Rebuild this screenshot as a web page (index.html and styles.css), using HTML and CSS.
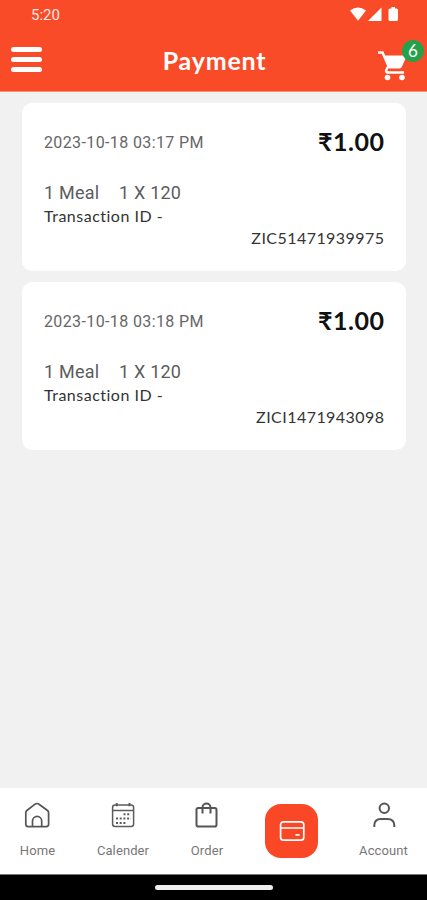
FILE: index.html
```html
<!DOCTYPE html>
<html lang="en">
<head>
<meta charset="utf-8">
<title>Payment</title>
<link rel="stylesheet" href="styles.css">
</head>
<body>
<header class="header">
  <div class="status">
    <span class="time">5:20</span>
    <svg class="status-icons" width="50" height="16" viewBox="0 0 50 16" fill="#fff"><path d="M0 3.500Q8-2.500 16 3.500L8 13.800Z"/><path d="M18 14L31.500 .5V14Z"/><path d="M41.500 0H45V1.500H46.500Q48 1.500 48 3V12.500Q48 14 46.500 14H40Q38.500 14 38.500 12.500V3Q38.500 1.500 40 1.500H41.500Z"/></svg>
  </div>
  <div class="bar">
    <div class="menu"><i></i><i></i><i></i></div>
    <h1 class="title">Payment</h1>
    <div class="cart">
      <svg width="30" height="30" viewBox="0 0 30 30" fill="none"><path d="M1 1.500H5.500L11.500 15L9.300 19Q8.500 21.500 11 21.500H27" stroke="#fff" stroke-width="2.500"/><path d="M6.500 4.500H28.500Q29.800 4.500 29.200 6L25 15.500Q24.200 17.500 22.500 17.500H12Z" fill="#fff"/><circle cx="10.500" cy="26.500" r="2.800" fill="#fff"/><circle cx="25" cy="26.500" r="2.800" fill="#fff"/></svg>
      <span class="badge">6</span>
    </div>
  </div>
</header>
<main class="list">
  <article class="card">
    <div class="top"><span class="date">2023-10-18 03:17 PM</span><span class="amount">₹1.00</span></div>
    <div class="meal"><span class="count">1 Meal</span><span>1 X 120</span></div>
    <div class="label">Transaction ID -</div>
    <div class="ref">ZIC51471939975</div>
  </article>
  <article class="card">
    <div class="top"><span class="date">2023-10-18 03:18 PM</span><span class="amount">₹1.00</span></div>
    <div class="meal"><span class="count">1 Meal</span><span>1 X 120</span></div>
    <div class="label">Transaction ID -</div>
    <div class="ref">ZICI1471943098</div>
  </article>
</main>
<nav class="nav">
  <a class="item"><svg width="26" height="26" viewBox="0 0 26 26" fill="none" stroke="#555" stroke-width="1.700"><path d="M1.800 10.800Q1.800 9.500 2.900 8.500L11 2.200Q13 .8 15 2.200L23.500 8.500Q24.600 9.500 24.600 10.800V22.300Q24.600 24.600 22.300 24.600H4.100Q1.800 24.600 1.800 22.300Z"/><path d="M8.500 24.500V19A4.600 4.600 0 0 1 17.700 19V24.500"/></svg><span>Home</span></a>
  <a class="item"><svg width="26" height="26" viewBox="0 0 26 26" fill="none" stroke="#5c5c5c" stroke-width="1.500"><rect x="2.600" y="3" width="21" height="21.600" rx="2.500"/><path d="M2.600 8.500H23.600"/><path d="M6.800 1V4.300M19.500 1V4.300" stroke-width="2"/><path d="M13.500 12.200H21M6 16.500H21M6 21H17" stroke-width="2" stroke-dasharray="2 1.700"/></svg><span>Calender</span></a>
  <a class="item"><svg width="26" height="26" viewBox="0 0 26 26" fill="none" stroke="#555" stroke-width="2"><rect x="2.500" y="6" width="20" height="18.500" rx="1.800"/><path d="M8.500 11.500V5.500A4 4 0 0 1 16.500 5.500V11.500"/></svg><span>Order</span></a>
  <a class="active"><svg width="26" height="22" viewBox="0 0 26 22" fill="none" stroke="#fff" stroke-width="1.700"><rect x="1.600" y="1.800" width="23.200" height="18.400" rx="3"/><path d="M1.600 8H24.800M16.500 14.800H20.500"/></svg></a>
  <a class="item"><svg width="26" height="26" viewBox="0 0 26 26" fill="none" stroke="#555" stroke-width="2"><circle cx="13.300" cy="6.200" r="4.700"/><path d="M3.300 25V23.500Q3.300 17 10 17H16.500Q23.300 17 23.300 23.500V25"/></svg><span>Account</span></a>
</nav>
<footer class="system"><div class="pill"></div></footer>
</body>
</html>
```
FILE: styles.css
```css
* { box-sizing: border-box; }
body { margin: 0; width: 427px; height: 900px; display: flex; flex-direction: column; overflow: hidden; background: #f1f1f1; font-family: Roboto, sans-serif; }
.header { height: 92px; background: #fa4b29; border-bottom: 1px solid #fb8f79; color: #fff; flex: none; }
.status { height: 30px; padding: 7px 27px 0 31px; display: flex; justify-content: space-between; }
.time { font-size: 15px; line-height: 16px; color: #ffe8e2; }
.bar { height: 61px; padding: 0 20px 0 11px; display: grid; grid-template-columns: 105px 1fr 94px; align-items: center; }
.menu { display: flex; flex-direction: column; gap: 5px; width: 31px; margin-bottom: 2px; }
.menu i { height: 5.300px; border-radius: 3px; background: #fff; }
.title { margin: -1px 0 0; font: 700 25px/30px Lato, sans-serif; text-align: center; letter-spacing: .8px; }
.cart { position: relative; width: 30px; height: 30px; justify-self: end; margin-top: 10px; }
.cart svg { display: block; }
.badge { position: absolute; left: 25px; top: -11px; width: 22px; height: 22px; border-radius: 50%; background: #26a14b; font: 17px/22px Lato, sans-serif; text-align: center; }
.list { flex: 1; padding: 11px 21px 0 22px; display: flex; flex-direction: column; gap: 11px; }
.card { height: 168px; padding: 25px 22px 0; background: #fff; border-radius: 10px; }
.top { height: 28px; display: flex; justify-content: space-between; align-items: center; }
.date { font-size: 16px; color: #666; letter-spacing: .38px; }
.amount { font: 700 25px/28px Lato, "Noto Sans", sans-serif; color: #111; letter-spacing: .5px; margin: -2px -.5px 0 0; }
.meal { display: flex; margin-top: 25px; font-size: 18px; line-height: 24px; color: #5c5c5c; letter-spacing: .2px; }
.count { width: 75px; }
.label { font: 16px/22px Lato, sans-serif; color: #333; letter-spacing: .5px; }
.ref { font: 16px/22px Lato, sans-serif; color: #333; text-align: right; letter-spacing: .45px; margin-right: -.5px; }
.nav { height: 87px; flex: none; background: #fff; border-bottom: 1px solid #777; display: grid; grid-template-columns: 75px 96px 72px 97px 87px; justify-items: center; }
.item { padding-top: 14px; display: flex; flex-direction: column; align-items: center; font-size: 13px; line-height: 16px; color: #777; gap: 15px; letter-spacing: .1px; }
.active { width: 53px; height: 54px; margin-top: 16px; background: #fa4726; border-radius: 16px; display: flex; align-items: center; justify-content: center; }
.system { height: 25px; flex: none; background: #000; padding-top: 10px; }
.pill { width: 118px; height: 5px; margin: 0 auto; border-radius: 3px; background: #eee; }
```
